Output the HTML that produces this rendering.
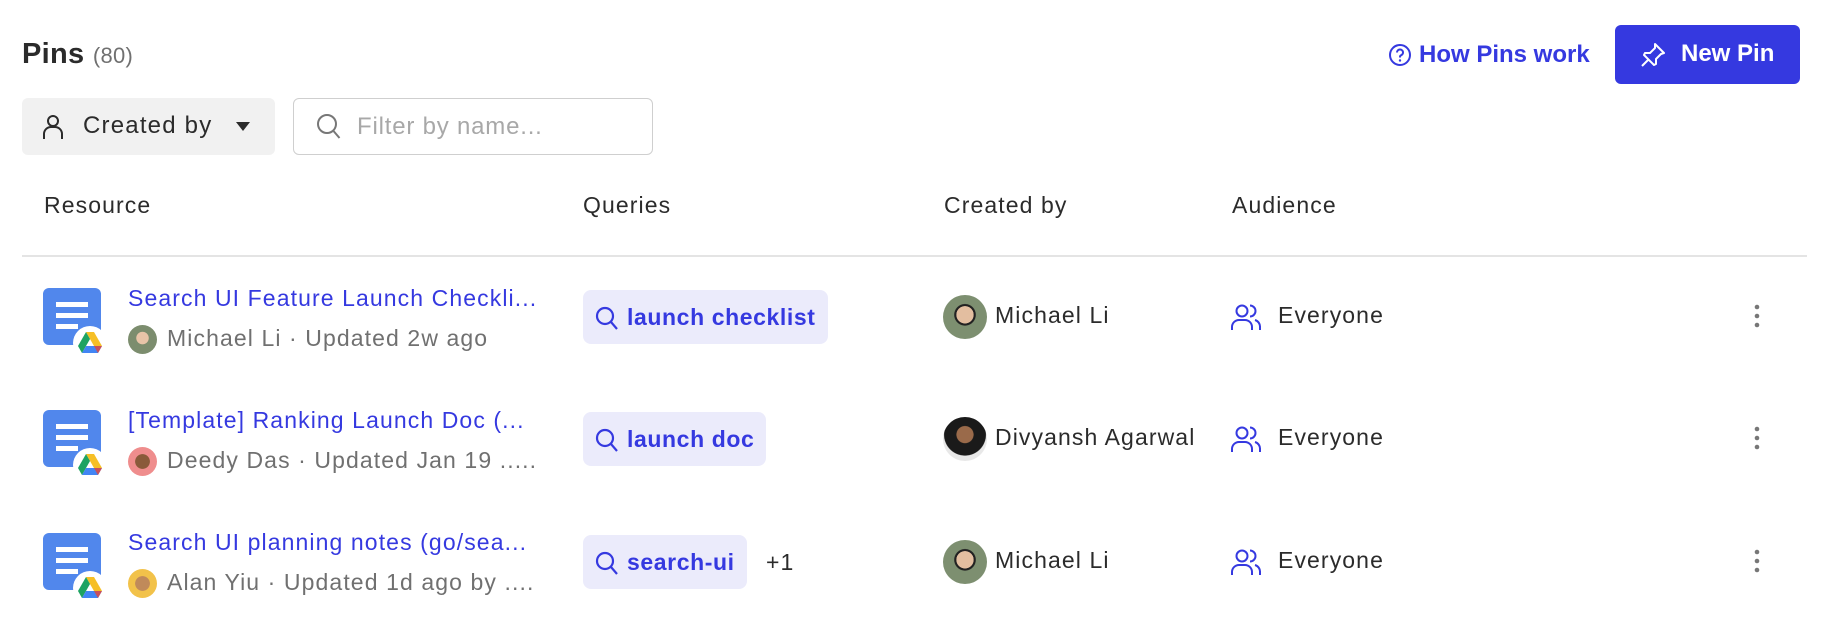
<!DOCTYPE html>
<html><head><meta charset="utf-8"><style>
*{box-sizing:border-box;margin:0;padding:0}
body{width:1822px;height:630px;background:#fff;font-family:"Liberation Sans",Arial,sans-serif;color:#2b2b2b;position:relative;overflow:hidden}
.a{position:absolute;white-space:nowrap}
.blue{color:#3539e0}
.chip{position:absolute;height:54px;background:#ebebfb;border-radius:8px;color:#3539e0;font-weight:bold;font-size:23px;line-height:54px;padding-left:44px;padding-right:12px;letter-spacing:0.6px}
.chip svg{position:absolute;left:12px;top:16px}
.title{font-size:23px;color:#3539e0;letter-spacing:1.1px}
.sub{font-size:23px;color:#707070;letter-spacing:1.1px}
.av{position:absolute;border-radius:50%}
.txt{font-size:23px;color:#2b2b2b;letter-spacing:1.1px}
</style></head><body>
<div class="a" style="left:22px;top:38px;font-size:29px;font-weight:bold;color:#2b2b2b;letter-spacing:0.3px">Pins <span style="font-weight:normal;font-size:22px;color:#707070">(80)</span></div>

<div class="a" style="left:22px;top:98px;width:253px;height:57px;background:#f1f1f1;border-radius:6px"></div>
<svg class="a" style="left:42px;top:114px" width="22" height="26" viewBox="0 0 22 26"><circle cx="11" cy="7" r="5" fill="none" stroke="#2b2b2b" stroke-width="2"/><path d="M2 25v-5a7 7 0 0 1 7-7h4a7 7 0 0 1 7 7v5" fill="none" stroke="#2b2b2b" stroke-width="2"/></svg>
<div class="a" style="left:83px;top:112px;font-size:24px;letter-spacing:1.2px">Created by</div>
<svg class="a" style="left:235px;top:121px" width="16" height="11"><path d="M1 1h14l-7 9z" fill="#2b2b2b"/></svg>

<div class="a" style="left:293px;top:98px;width:360px;height:57px;border:1.5px solid #cfcfcf;border-radius:6px"></div>
<svg class="a" style="left:316px;top:113px" width="26" height="28" viewBox="0 0 26 28"><circle cx="11" cy="11" r="9" fill="none" stroke="#777" stroke-width="2"/><path d="M17.5 18l6 7" stroke="#777" stroke-width="2"/></svg>
<div class="a" style="left:357px;top:113px;font-size:24px;color:#a8a8a8;letter-spacing:0.8px">Filter by name...</div>

<svg class="a" style="left:1388px;top:43px" width="24" height="24" viewBox="0 0 24 24"><circle cx="12" cy="12" r="10" fill="none" stroke="#3539e0" stroke-width="2"/><path d="M9 9.5a3 3 0 1 1 4 2.8c-.8.4-1 .9-1 1.7v.5" fill="none" stroke="#3539e0" stroke-width="2"/><circle cx="12" cy="17.5" r="1.2" fill="#3539e0"/></svg>
<div class="a blue" style="left:1419px;top:41px;font-size:24px;font-weight:bold">How Pins work</div>
<div class="a" style="left:1615px;top:25px;width:185px;height:59px;background:#3539e0;border-radius:6px"></div>
<svg class="a" style="left:1640px;top:42px" width="26" height="26" viewBox="0 0 26 26"><path d="M15 2l9 9-3 1-5 5 0 5-2 1-10-10 1-2 5 0 5-5z" fill="none" stroke="#fff" stroke-width="2" stroke-linejoin="round"/><path d="M8 18l-6 6" stroke="#fff" stroke-width="2"/></svg>
<div class="a" style="left:1681px;top:40px;font-size:24px;font-weight:bold;color:#fff">New Pin</div>

<div class="a txt" style="left:44px;top:192px">Resource</div>
<div class="a txt" style="left:583px;top:192px">Queries</div>
<div class="a txt" style="left:944px;top:192px">Created by</div>
<div class="a txt" style="left:1232px;top:192px">Audience</div>
<div class="a" style="left:22px;top:255px;width:1785px;height:1.5px;background:#e4e4e4"></div>

<!-- Row 1 -->
<svg class="a" style="left:43px;top:288px" width="74" height="72" viewBox="0 0 74 72"><rect x="0" y="0" width="58" height="57" rx="6" fill="#5187ec"/><rect x="13" y="14" width="32" height="5" fill="#fff"/><rect x="13" y="25" width="32" height="5" fill="#fff"/><rect x="13" y="36" width="22" height="5" fill="#fff"/><circle cx="47" cy="55" r="17" fill="#fff"/><path d="M43 44h8l8 14h-8z" fill="#f6bf26"/><path d="M43 44l-8 14 4 7 8-14z" fill="#1ea362"/><path d="M39 65h16l4-7H43z" fill="#4285f4"/><path d="M55 65l4-7h-8z" fill="#e94235" opacity=".8"/></svg>
<div class="a title" style="left:128px;top:285px">Search UI Feature Launch Checkli...</div>
<div class="av" style="left:128px;top:325px;width:29px;height:29px;background:radial-gradient(circle at 50% 45%,#e8c4a8 0 28%,#7c8d6e 30%)"></div>
<div class="a sub" style="left:167px;top:325px">Michael Li · Updated 2w ago</div>
<div class="chip" style="left:583px;top:290px"><svg width="24" height="26" viewBox="0 0 24 26"><circle cx="10" cy="10" r="8" fill="none" stroke="#3539e0" stroke-width="2.2"/><path d="M16 16l6 7" stroke="#3539e0" stroke-width="2.2"/></svg>launch checklist</div>
<div class="av" style="left:943px;top:295px;width:44px;height:44px;background:radial-gradient(circle at 50% 45%,#e3bea0 0 26%,#222 27% 32%,#7d8f70 34%)"></div>
<div class="a txt" style="left:995px;top:302px">Michael Li</div>
<svg class="a" style="left:1231px;top:303px" width="30" height="28" viewBox="0 0 30 28"><circle cx="11" cy="8" r="5.5" fill="none" stroke="#3539e0" stroke-width="2"/><path d="M1 27v-3a7 7 0 0 1 7-7h6a7 7 0 0 1 7 7v3" fill="none" stroke="#3539e0" stroke-width="2"/><path d="M19 2.5a5.5 5.5 0 0 1 0 11M24 17a7 7 0 0 1 5 7v3" fill="none" stroke="#3539e0" stroke-width="2"/></svg>
<div class="a txt" style="left:1278px;top:302px">Everyone</div>
<svg class="a" style="left:1752px;top:302px" width="10" height="28"><circle cx="5" cy="5" r="2.3" fill="#777"/><circle cx="5" cy="14" r="2.3" fill="#777"/><circle cx="5" cy="23" r="2.3" fill="#777"/></svg>

<!-- Row 2 -->
<svg class="a" style="left:43px;top:410px" width="74" height="72" viewBox="0 0 74 72"><rect x="0" y="0" width="58" height="57" rx="6" fill="#5187ec"/><rect x="13" y="14" width="32" height="5" fill="#fff"/><rect x="13" y="25" width="32" height="5" fill="#fff"/><rect x="13" y="36" width="22" height="5" fill="#fff"/><circle cx="47" cy="55" r="17" fill="#fff"/><path d="M43 44h8l8 14h-8z" fill="#f6bf26"/><path d="M43 44l-8 14 4 7 8-14z" fill="#1ea362"/><path d="M39 65h16l4-7H43z" fill="#4285f4"/><path d="M55 65l4-7h-8z" fill="#e94235" opacity=".8"/></svg>
<div class="a title" style="left:128px;top:407px">[Template] Ranking Launch Doc (...</div>
<div class="av" style="left:128px;top:447px;width:29px;height:29px;background:radial-gradient(circle at 50% 50%,#8a5a3a 0 35%,#ef8d8d 37%)"></div>
<div class="a sub" style="left:167px;top:447px">Deedy Das · Updated Jan 19 .....</div>
<div class="chip" style="left:583px;top:412px"><svg width="24" height="26" viewBox="0 0 24 26"><circle cx="10" cy="10" r="8" fill="none" stroke="#3539e0" stroke-width="2.2"/><path d="M16 16l6 7" stroke="#3539e0" stroke-width="2.2"/></svg>launch doc</div>
<div class="av" style="left:943px;top:417px;width:44px;height:44px;background:radial-gradient(circle at 50% 40%,#9a6a4a 0 24%,#1a1a1a 26% 60%,#e8e8e8 62%)"></div>
<div class="a txt" style="left:995px;top:424px">Divyansh Agarwal</div>
<svg class="a" style="left:1231px;top:425px" width="30" height="28" viewBox="0 0 30 28"><circle cx="11" cy="8" r="5.5" fill="none" stroke="#3539e0" stroke-width="2"/><path d="M1 27v-3a7 7 0 0 1 7-7h6a7 7 0 0 1 7 7v3" fill="none" stroke="#3539e0" stroke-width="2"/><path d="M19 2.5a5.5 5.5 0 0 1 0 11M24 17a7 7 0 0 1 5 7v3" fill="none" stroke="#3539e0" stroke-width="2"/></svg>
<div class="a txt" style="left:1278px;top:424px">Everyone</div>
<svg class="a" style="left:1752px;top:424px" width="10" height="28"><circle cx="5" cy="5" r="2.3" fill="#777"/><circle cx="5" cy="14" r="2.3" fill="#777"/><circle cx="5" cy="23" r="2.3" fill="#777"/></svg>

<!-- Row 3 -->
<svg class="a" style="left:43px;top:533px" width="74" height="72" viewBox="0 0 74 72"><rect x="0" y="0" width="58" height="57" rx="6" fill="#5187ec"/><rect x="13" y="14" width="32" height="5" fill="#fff"/><rect x="13" y="25" width="32" height="5" fill="#fff"/><rect x="13" y="36" width="22" height="5" fill="#fff"/><circle cx="47" cy="55" r="17" fill="#fff"/><path d="M43 44h8l8 14h-8z" fill="#f6bf26"/><path d="M43 44l-8 14 4 7 8-14z" fill="#1ea362"/><path d="M39 65h16l4-7H43z" fill="#4285f4"/><path d="M55 65l4-7h-8z" fill="#e94235" opacity=".8"/></svg>
<div class="a title" style="left:128px;top:529px">Search UI planning notes (go/sea...</div>
<div class="av" style="left:128px;top:569px;width:29px;height:29px;background:radial-gradient(circle at 50% 50%,#c08a5a 0 35%,#f2c24a 37%)"></div>
<div class="a sub" style="left:167px;top:569px">Alan Yiu · Updated 1d ago by ....</div>
<div class="chip" style="left:583px;top:535px"><svg width="24" height="26" viewBox="0 0 24 26"><circle cx="10" cy="10" r="8" fill="none" stroke="#3539e0" stroke-width="2.2"/><path d="M16 16l6 7" stroke="#3539e0" stroke-width="2.2"/></svg>search-ui</div>
<div class="a txt" style="left:766px;top:549px">+1</div>
<div class="av" style="left:943px;top:540px;width:44px;height:44px;background:radial-gradient(circle at 50% 45%,#e3bea0 0 26%,#222 27% 32%,#7d8f70 34%)"></div>
<div class="a txt" style="left:995px;top:547px">Michael Li</div>
<svg class="a" style="left:1231px;top:548px" width="30" height="28" viewBox="0 0 30 28"><circle cx="11" cy="8" r="5.5" fill="none" stroke="#3539e0" stroke-width="2"/><path d="M1 27v-3a7 7 0 0 1 7-7h6a7 7 0 0 1 7 7v3" fill="none" stroke="#3539e0" stroke-width="2"/><path d="M19 2.5a5.5 5.5 0 0 1 0 11M24 17a7 7 0 0 1 5 7v3" fill="none" stroke="#3539e0" stroke-width="2"/></svg>
<div class="a txt" style="left:1278px;top:547px">Everyone</div>
<svg class="a" style="left:1752px;top:547px" width="10" height="28"><circle cx="5" cy="5" r="2.3" fill="#777"/><circle cx="5" cy="14" r="2.3" fill="#777"/><circle cx="5" cy="23" r="2.3" fill="#777"/></svg>
</body></html>
